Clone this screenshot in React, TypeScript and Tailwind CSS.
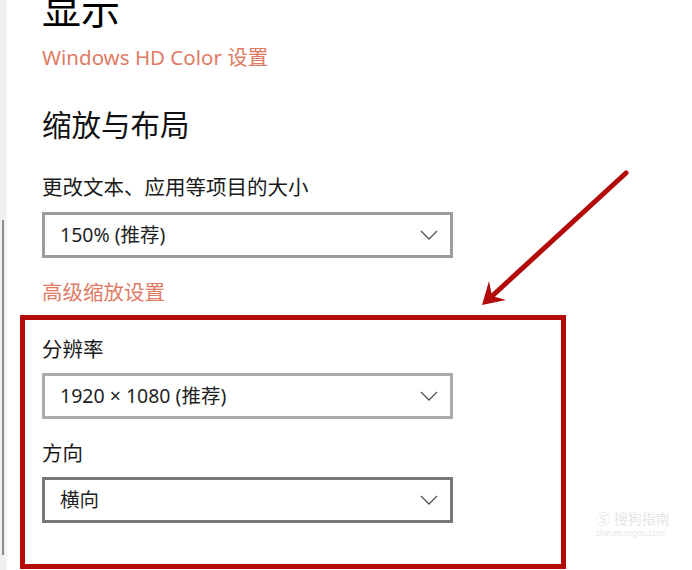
import React from "react";

const font = { fontFamily: '"Noto Sans", "Noto Sans CJK SC", sans-serif' };

const Chevron: React.FC = () => (
    <svg width="18" height="10" viewBox="0 0 18 10" fill="none">
        <path d="M1 1 L9 9 L17 1" stroke="#555" strokeWidth="1.3" />
    </svg>
);

const Dropdown: React.FC<{ value: string; border: string }> = ({ value, border }) => (
    <div className={`flex items-center justify-between w-[411px] h-[46px] border-[3px] pl-[15px] pr-[12px] text-[19.5px] text-[#1f1f1f] ${border}`}>
        <span className="leading-none">{value}</span>
        <Chevron />
    </div>
);

const App: React.FC = () => {
    return (
        <div className="relative w-[692px] h-[570px] overflow-hidden bg-white flex" style={font}>
            {/* scrollbar strip */}
            <div className="w-[7px] h-full bg-[#f1f1f1] shrink-0">
                <div className="mt-[220px] ml-[2px] w-[2px] h-[335px] bg-[#8a8a8a]" />
            </div>

            <div className="pl-[35px] flex flex-col">
                <div className="mt-[-12px] h-[41px] leading-[41px] text-[39px] text-black">显示</div>
                <div className="mt-[14px] h-[28px] leading-[28px] text-[20.5px] text-[#df7b65]">Windows HD Color 设置</div>
                <div className="mt-[34px] h-[40px] leading-[40px] text-[29.5px] text-[#111]">缩放与布局</div>
                <div className="mt-[28px] h-[28px] leading-[28px] text-[20.5px] text-[#1a1a1a]">更改文本、应用等项目的大小</div>
                <div className="mt-[11px]">
                    <Dropdown value="150% (推荐)" border="border-[#9c9c9c]" />
                </div>
                <div className="mt-[20px] h-[28px] leading-[28px] text-[20.5px] text-[#df7b65]">高级缩放设置</div>

                {/* highlighted box */}
                <div className="mt-[9px] ml-[-22px] w-[546px] border-[5px] border-[#b30a0a] pl-[17px] pt-[15px] pb-[41px]">
                    <div className="h-[28px] leading-[28px] text-[20.5px] text-[#1a1a1a]">分辨率</div>
                    <div className="mt-[10px]">
                        <Dropdown value="1920 × 1080 (推荐)" border="border-[#ababab]" />
                    </div>
                    <div className="mt-[20px] h-[28px] leading-[28px] text-[20.5px] text-[#1a1a1a]">方向</div>
                    <div className="mt-[10px]">
                        <Dropdown value="横向" border="border-[#787878]" />
                    </div>
                </div>
            </div>

            {/* arrow annotation */}
            <svg className="absolute left-0 top-0" width="692" height="570" viewBox="0 0 692 570">
                <line x1="626" y1="173" x2="490" y2="298" stroke="#b30a0a" strokeWidth="5" strokeLinecap="round" />
                <polygon points="482,305 489,281 492,296 506,300" fill="#b30a0a" />
            </svg>

            {/* watermark */}
            <div className="absolute left-[596px] top-[510px] flex flex-col items-start text-[#e6e6e6]">
                <span className="text-[14px] leading-[18px]">Ⓢ 搜狗指南</span>
                <span className="text-[8px] leading-[10px]">zhinan.sogou.com</span>
            </div>
        </div>
    );
};

export default App;
